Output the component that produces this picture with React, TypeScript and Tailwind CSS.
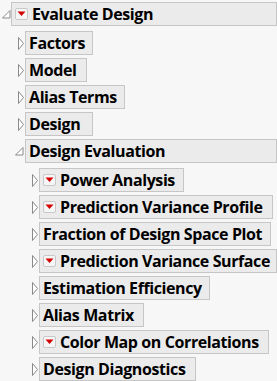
import React from 'react';

type Item = { label: string; menu?: boolean; width: number };

const MenuIcon = () => (
  <span className="flex items-center justify-center w-[13px] h-[12px] mr-[4px] border border-[#c8c8c8] bg-[#f6f6f6] rounded-[2px]">
    <svg width="9" height="6" viewBox="0 0 9 6">
      <path d="M0.5 0.5 H8.5 L4.5 5 Z" fill="#d40000" />
    </svg>
  </span>
);

const Closed = () => (
  <svg width="8" height="13" viewBox="0 0 8 13" className="shrink-0">
    <path d="M1.5 0.5 L6.5 6.5 L1.5 12.5 Z" fill="#fff" stroke="#8a8a8a" strokeWidth="1" />
  </svg>
);

const Open = () => (
  <svg width="9" height="9" viewBox="0 0 9 9" className="shrink-0">
    <path d="M8 0.5 L8 8 L0.5 8 Z" fill="#fff" stroke="#8a8a8a" strokeWidth="1" />
  </svg>
);

const Box = ({ label, menu, width }: Item) => (
  <div
    className="flex items-center h-[24px] bg-[#ebebeb] border border-[#c6c6c6] pl-[3px] text-[16px] tracking-[-0.4px] font-bold text-black leading-none whitespace-nowrap"
    style={{ width }}
  >
    {menu && <MenuIcon />}
    <span>{label}</span>
  </div>
);

const top: Item[] = [
  { label: 'Factors', width: 68 },
  { label: 'Model', width: 62 },
  { label: 'Alias Terms', width: 100 },
  { label: 'Design', width: 68 },
];

const evals: Item[] = [
  { label: 'Power Analysis', menu: true, width: 145 },
  { label: 'Prediction Variance Profile', menu: true, width: 234 },
  { label: 'Fraction of Design Space Plot', width: 232 },
  { label: 'Prediction Variance Surface', menu: true, width: 238 },
  { label: 'Estimation Efficiency', width: 171 },
  { label: 'Alias Matrix', width: 105 },
  { label: 'Color Map on Correlations', menu: true, width: 230 },
  { label: 'Design Diagnostics', width: 157 },
];

export default function App() {
  return (
    <div
      className="w-[277px] h-[381px] bg-[#f7f7f7] overflow-hidden pt-[2px]"
      style={{ fontFamily: '"Open Sans", "Noto Sans", sans-serif' }}
    >
      <div className="flex items-center pl-[2px]">
        <Open />
        <Box label="Evaluate Design" menu width={266} />
      </div>
      <div className="flex flex-col gap-[3px] mt-[5px] pl-[17px]">
        {top.map((it) => (
          <div key={it.label} className="flex items-center">
            <Closed />
            <Box {...it} />
          </div>
        ))}
        <div className="flex items-center gap-[1px] -ml-[2px]">
          <Open />
          <Box label="Design Evaluation" width={252} />
        </div>
        <div className="flex flex-col gap-[3px] mt-[2px] pl-[14px]">
          {evals.map((it) => (
            <div key={it.label} className="flex items-center">
              <Closed />
              <Box {...it} />
            </div>
          ))}
        </div>
      </div>
    </div>
  );
}
